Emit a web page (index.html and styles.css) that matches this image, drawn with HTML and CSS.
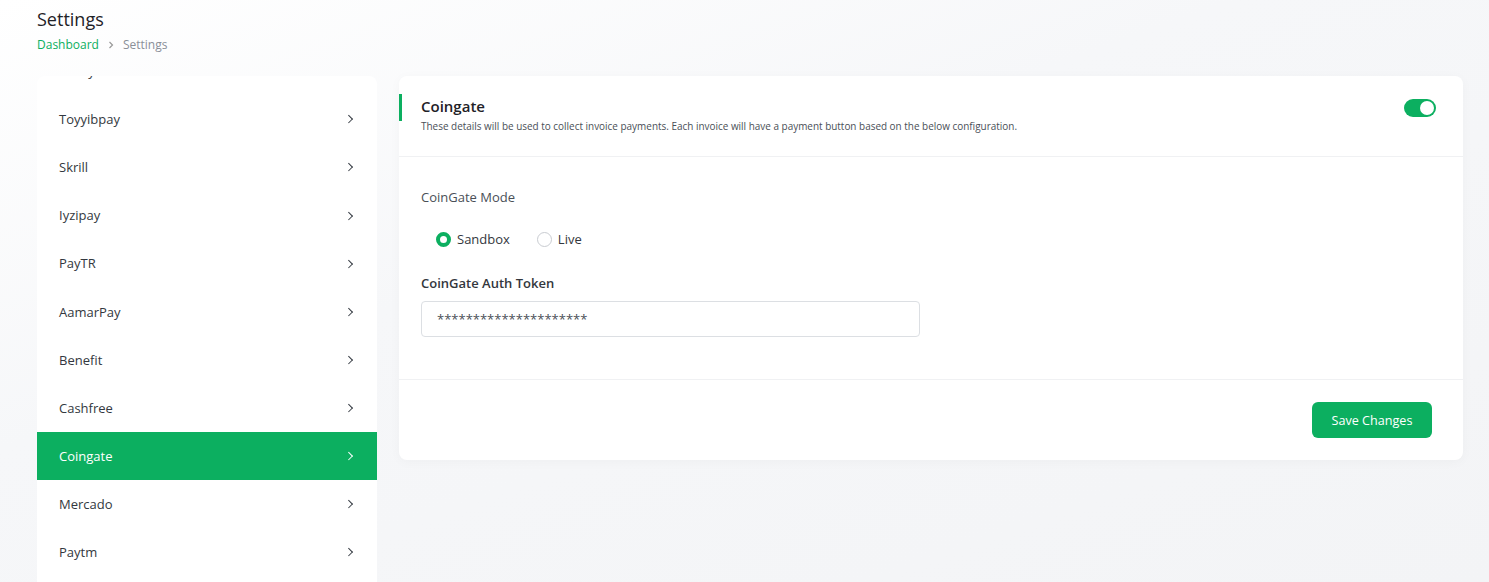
FILE: index.html
```html
<!DOCTYPE html>
<html>
<head>
    <link rel="stylesheet" href="styles.css">
</head>
<body>
    <div class="page">
        <div class="page-header">
            <h1 class="page-title">Settings</h1>
            <div class="breadcrumb">
                <a href="#" class="crumb-link">Dashboard</a>
                <svg class="crumb-sep" width="8" height="8" viewBox="0 0 8 8"><polyline points="2.5,1 5.5,4 2.5,7" fill="none" stroke="#999" stroke-width="1.2"/></svg>
                <span class="crumb-current">Settings</span>
            </div>
        </div>

        <div class="settings">
            <div class="side-card">
                <ul class="side-list" id="sideList">
                    <li class="side-item">SSPay<span class="chev"></span></li>
                    <li class="side-item">Toyyibpay<span class="chev"></span></li>
                    <li class="side-item">Skrill<span class="chev"></span></li>
                    <li class="side-item">Iyzipay<span class="chev"></span></li>
                    <li class="side-item">PayTR<span class="chev"></span></li>
                    <li class="side-item">AamarPay<span class="chev"></span></li>
                    <li class="side-item">Benefit<span class="chev"></span></li>
                    <li class="side-item">Cashfree<span class="chev"></span></li>
                    <li class="side-item active">Coingate<span class="chev"></span></li>
                    <li class="side-item">Mercado<span class="chev"></span></li>
                    <li class="side-item">Paytm<span class="chev"></span></li>
                    <li class="side-item">Payfast<span class="chev"></span></li>
                </ul>
            </div>

            <div class="main-card">
                <div class="card-head">
                    <div>
                        <h5 class="card-title">Coingate</h5>
                        <p class="card-desc">These details will be used to collect invoice payments. Each invoice will have a payment button based on the below configuration.</p>
                    </div>
                    <label class="switch">
                        <input type="checkbox" checked>
                        <span class="slider"></span>
                    </label>
                </div>

                <div class="card-body">
                    <div class="field-label">CoinGate Mode</div>
                    <div class="radio-row">
                        <label class="radio"><span class="dot checked"></span>Sandbox</label>
                        <label class="radio"><span class="dot"></span>Live</label>
                    </div>

                    <div class="field-label bold">CoinGate Auth Token</div>
                    <input class="text-input" type="text" value="*********************">
                </div>

                <div class="card-foot">
                    <button class="btn-save">Save Changes</button>
                </div>
            </div>
        </div>
    </div>

    <script>
        document.getElementById('sideList').scrollTop = 29;
    </script>
</body>
</html>
```

FILE: styles.css
```css
* {
    margin: 0;
    padding: 0;
    box-sizing: border-box;
    font-family: "Open Sans", sans-serif;
}

html, body {
    height: 100%;
    overflow: hidden;
}

body {
    background: linear-gradient(160deg, #ffffff 0%, #f6f7f9 40%, #f3f4f6 100%);
    color: #293240;
}

.page {
    padding: 7px 26px 0 37px;
}

.page-title {
    font-size: 18px;
    font-weight: 500;
    line-height: 24px;
    color: #1f2227;
}

.breadcrumb {
    display: flex;
    align-items: center;
    gap: 8px;
    margin-top: 5px;
    font-size: 12px;
    line-height: 18px;
}

.crumb-link {
    color: #0caf60;
    text-decoration: none;
}

.crumb-current {
    color: #8a8f98;
}

.settings {
    display: flex;
    align-items: flex-start;
    gap: 22px;
    margin-top: 22px;
}

.side-card {
    width: 340px;
    flex-shrink: 0;
    background: #fff;
    border-radius: 8px 8px 0 0;
    overflow: hidden;
}

.side-list {
    list-style: none;
    height: 540px;
    overflow: hidden;
}

.side-item {
    display: flex;
    align-items: center;
    justify-content: space-between;
    height: 48.1px;
    padding: 0 26px 0 22px;
    font-size: 13px;
    color: #333840;
}

.side-item.active {
    background: #0caf60;
    color: #fff;
}

.chev {
    width: 5.5px;
    height: 5.5px;
    border-right: 1.4px solid #333840;
    border-top: 1.4px solid #333840;
    transform: rotate(45deg);
}

.side-item.active .chev {
    border-color: #fff;
}

.main-card {
    flex: 1;
    background: #fff;
    border-radius: 8px;
    box-shadow: 0 2px 12px rgba(0, 0, 0, 0.03);
}

.card-head {
    position: relative;
    display: flex;
    justify-content: space-between;
    align-items: flex-start;
    padding: 19px 27px 23px 22px;
    border-bottom: 1px solid #f0f1f3;
}

.card-head::before {
    content: "";
    position: absolute;
    left: 0;
    top: 18px;
    width: 3px;
    height: 27px;
    background: #0caf60;
}

.card-title {
    font-size: 15px;
    font-weight: 600;
    line-height: 22px;
    color: #1f2227;
}

.card-desc {
    margin-top: 2px;
    font-size: 9.95px;
    line-height: 14px;
    color: #4a4f57;
}

.switch {
    position: relative;
    display: block;
    width: 32px;
    height: 18px;
    margin-top: 4px;
}

.switch input {
    display: none;
}

.slider {
    position: absolute;
    inset: 0;
    background: #0caf60;
    border-radius: 9px;
}

.slider::after {
    content: "";
    position: absolute;
    right: 2px;
    top: 2px;
    width: 14px;
    height: 14px;
    border-radius: 50%;
    background: #fff;
}

.card-body {
    padding: 30px 22px 42px;
    border-bottom: 1px solid #f0f1f3;
}

.field-label {
    font-size: 13px;
    line-height: 20px;
    color: #4a4f57;
}

.field-label.bold {
    font-weight: 600;
    color: #33373d;
    margin-top: 24px;
}

.radio-row {
    display: flex;
    gap: 27px;
    padding-left: 15px;
    margin-top: 22px;
}

.radio {
    display: flex;
    align-items: center;
    gap: 6px;
    font-size: 13px;
    line-height: 20px;
    color: #33373d;
}

.dot {
    width: 15px;
    height: 15px;
    border-radius: 50%;
    border: 1px solid #c9ccd1;
    background: #fff;
}

.dot.checked {
    border: 4.5px solid #0caf60;
}

.text-input {
    display: block;
    width: 499px;
    height: 36px;
    margin-top: 8px;
    padding: 0 15px;
    border: 1px solid #dcdfe3;
    border-radius: 4px;
    font-size: 13px;
    color: #4a4f57;
    outline: none;
}

.card-foot {
    display: flex;
    justify-content: flex-end;
    padding: 22px 31px 22px;
}

.btn-save {
    width: 120px;
    height: 36px;
    border: none;
    border-radius: 6px;
    background: #0caf60;
    color: #fff;
    font-size: 12.6px;
    font-weight: 500;
    cursor: pointer;
}
```
